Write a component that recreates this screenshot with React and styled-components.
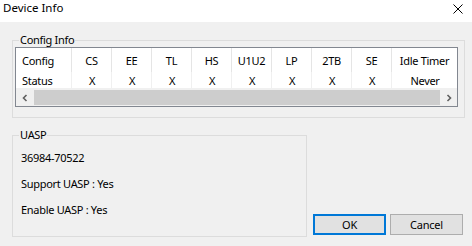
import React from 'react';
import styled, { createGlobalStyle } from 'styled-components';

const GlobalStyle = createGlobalStyle`
    html, body {
        margin: 0;
        padding: 0;
        background: #f0f0f0;
    }
    * {
        box-sizing: border-box;
    }
`;

const columns = [
    { key: 'config', title: 'Config', status: 'Status', left: true },
    { key: 'cs', title: 'CS', status: 'X' },
    { key: 'ee', title: 'EE', status: 'X' },
    { key: 'tl', title: 'TL', status: 'X' },
    { key: 'hs', title: 'HS', status: 'X' },
    { key: 'u1u2', title: 'U1U2', status: 'X' },
    { key: 'lp', title: 'LP', status: 'X' },
    { key: '2tb', title: '2TB', status: 'X' },
    { key: 'se', title: 'SE', status: 'X' },
    { key: 'idle', title: 'Idle Timer', status: 'Never', last: true },
];

const uaspLines = ['36984-70522', 'Support UASP : Yes', 'Enable UASP : Yes'];

const Chevron = ({ dir }) => (
    <svg width="8" height="8" viewBox="0 0 8 8">
        <path
            d={dir === 'left' ? 'M5.5 1 L2.5 4 L5.5 7' : 'M2.5 1 L5.5 4 L2.5 7'}
            fill="none"
            stroke="#606060"
            strokeWidth="1.6"
        />
    </svg>
);

const App = () => {
    return (
        <Window>
            <GlobalStyle />
            <TitleBar>
                <Title>Device Info</Title>
                <CloseButton>
                    <svg width="10" height="10" viewBox="0 0 10 10">
                        <path d="M0.5 0.5 L9.5 9.5 M9.5 0.5 L0.5 9.5" stroke="#000" strokeWidth="1" />
                    </svg>
                </CloseButton>
            </TitleBar>
            <Body>
                <ConfigGroup>
                    <Legend>Config Info</Legend>
                    <ListView>
                        <HeaderRow>
                            {columns.map((c) => (
                                <HeaderCell key={c.key} $left={c.left} $last={c.last}>
                                    {c.title}
                                </HeaderCell>
                            ))}
                        </HeaderRow>
                        <DataRow>
                            {columns.map((c) => (
                                <DataCell key={c.key} $left={c.left} $last={c.last}>
                                    {c.status}
                                </DataCell>
                            ))}
                        </DataRow>
                        <ScrollBar>
                            <ScrollArrow>
                                <Chevron dir="left" />
                            </ScrollArrow>
                            <ScrollThumb />
                            <ScrollArrow>
                                <Chevron dir="right" />
                            </ScrollArrow>
                        </ScrollBar>
                    </ListView>
                </ConfigGroup>
                <BottomRow>
                    <UaspGroup>
                        <Legend>UASP</Legend>
                        <InfoList>
                            {uaspLines.map((line) => (
                                <InfoLine key={line}>{line}</InfoLine>
                            ))}
                        </InfoList>
                    </UaspGroup>
                    <ButtonRow>
                        <DialogButton $default>OK</DialogButton>
                        <DialogButton>Cancel</DialogButton>
                    </ButtonRow>
                </BottomRow>
            </Body>
        </Window>
    );
};

export default App;

const Window = styled.div`
    width: 472px;
    height: 246px;
    display: flex;
    flex-direction: column;
    background: #f0f0f0;
    font-family: "Noto Sans", "Liberation Sans", sans-serif;
    font-size: 11px;
    color: #000;
    overflow: hidden;
`;

const TitleBar = styled.div`
    height: 22px;
    flex-shrink: 0;
    background: #ffffff;
    display: flex;
    align-items: flex-start;
    justify-content: space-between;
    padding-left: 3px;
`;

const Title = styled.span`
    font-size: 11.5px;
    line-height: 16px;
`;

const CloseButton = styled.div`
    width: 10px;
    height: 10px;
    margin: 4px 9px 0 0;
    display: flex;
`;

const Body = styled.div`
    flex: 1;
    display: flex;
    flex-direction: column;
    padding-top: 11px;
    padding-left: 12px;
`;

const Group = styled.fieldset`
    margin: 0;
    padding: 0;
    border: 1px solid #dcdcdc;
    min-width: 0;
`;

const ConfigGroup = styled(Group)`
    width: 453px;
    padding-bottom: 10px;
`;

const Legend = styled.legend`
    margin-left: 6px;
    padding: 0 1px;
    line-height: 14px;
    letter-spacing: -0.3px;
`;

const ListView = styled.div`
    width: 443px;
    height: 60px;
    margin-left: 2px;
    border: 1px solid #828790;
    background: #ffffff;
    display: flex;
    flex-direction: column;
    letter-spacing: -0.3px;
`;

const rowColumns = '56px repeat(8, 40px) 65px';

const HeaderRow = styled.div`
    display: grid;
    grid-template-columns: ${rowColumns};
    height: 24px;
`;

const HeaderCell = styled.div`
    display: flex;
    align-items: center;
    justify-content: ${(p) => (p.$left ? 'flex-start' : 'center')};
    padding-left: ${(p) => (p.$left ? '6px' : '0')};
    border-right: ${(p) => (p.$last ? 'none' : '1px solid #e5e5e5')};
`;

const DataRow = styled.div`
    display: grid;
    grid-template-columns: ${rowColumns};
    height: 17px;
    border-bottom: 1px solid #f0f0f0;
`;

const DataCell = styled.div`
    display: flex;
    align-items: center;
    justify-content: ${(p) => (p.$left ? 'flex-start' : 'center')};
    padding-left: ${(p) => (p.$left ? '6px' : '1px')};
    border-right: ${(p) => (p.$last ? 'none' : '1px solid #f0f0f0')};
`;

const ScrollBar = styled.div`
    height: 17px;
    display: flex;
    background: #f0f0f0;
`;

const ScrollArrow = styled.div`
    width: 17px;
    display: flex;
    align-items: center;
    justify-content: center;
`;

const ScrollThumb = styled.div`
    flex: 1;
    margin: 1px 0 1px 1px;
    background: #cdcdcd;
`;

const BottomRow = styled.div`
    display: flex;
    align-items: flex-end;
    margin-top: 10px;
`;

const UaspGroup = styled(Group)`
    width: 295px;
    height: 109px;
`;

const InfoList = styled.div`
    display: flex;
    flex-direction: column;
    padding: 3px 0 0 8px;
    letter-spacing: -0.3px;
`;

const InfoLine = styled.div`
    line-height: 26px;
`;

const ButtonRow = styled.div`
    display: flex;
    gap: 4px;
    margin: 0 0 2px 6px;
`;

const DialogButton = styled.button`
    width: 73px;
    height: 21px;
    padding: 0;
    font-family: "Noto Sans", "Liberation Sans", sans-serif;
    font-size: 11px;
    letter-spacing: -0.2px;
    color: #000;
    background: #e1e1e1;
    border: ${(p) => (p.$default ? '2px solid #0078d7' : '1px solid #adadad')};
    border-radius: 0;
    cursor: pointer;
`;
